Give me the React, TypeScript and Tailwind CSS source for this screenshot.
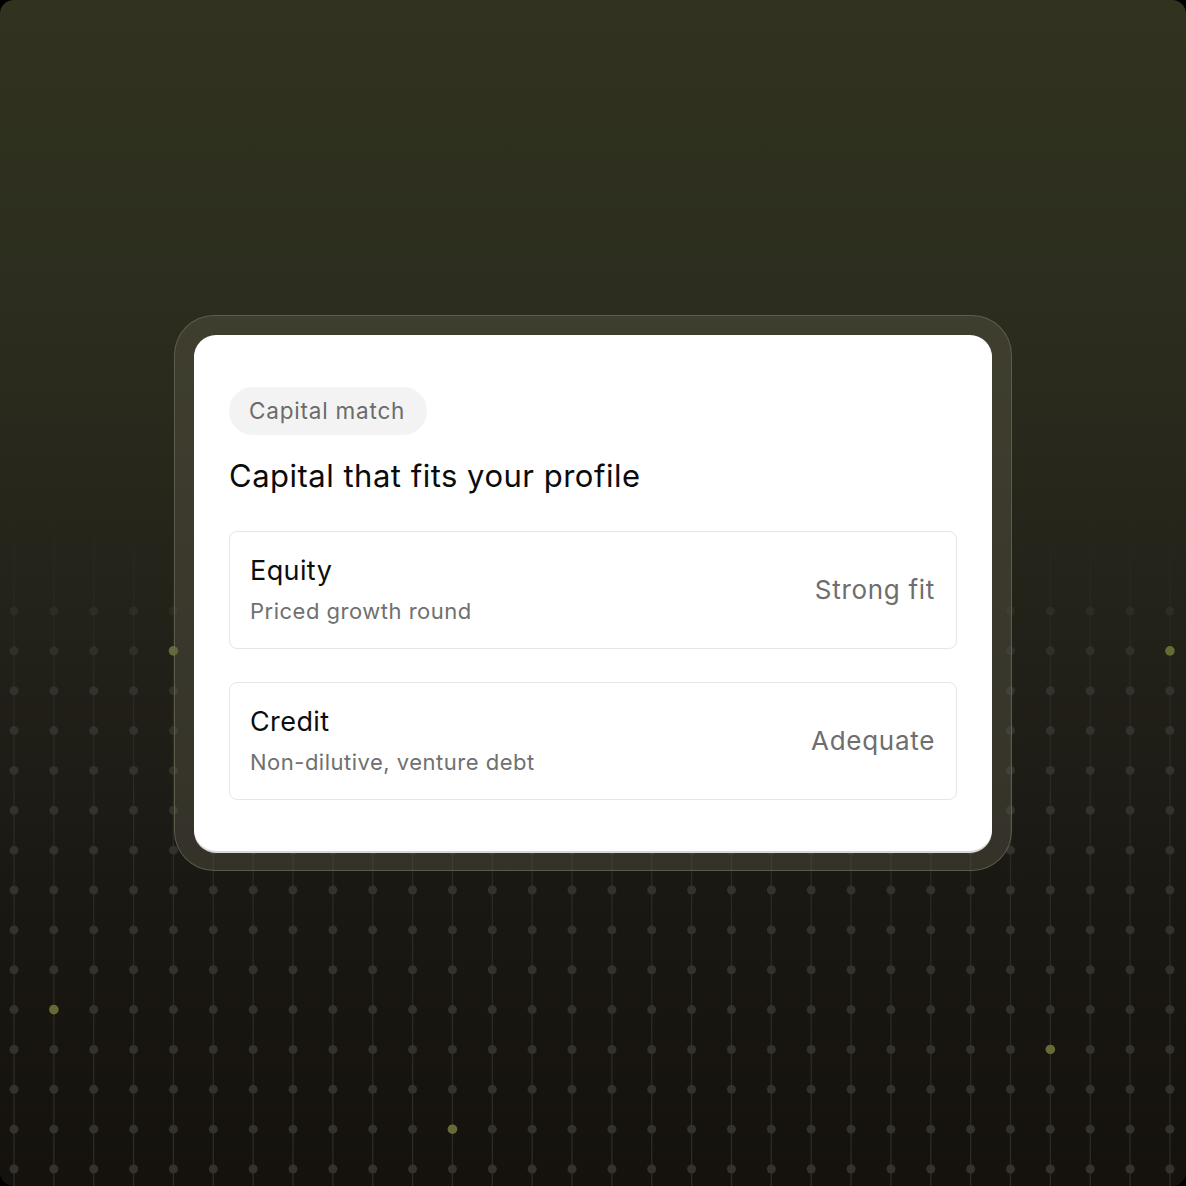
import React from "react";

const COLS = 30;
const ROWS = 15;
const SP = 39.86;
const X0 = 14;
const Y0 = 611;

const highlights = new Set(["4-1", "29-1", "1-10", "26-11", "11-13"]);

function DotGrid() {
  const lines: React.ReactNode[] = [];
  const dots: React.ReactNode[] = [];
  for (let c = 0; c < COLS; c++) {
    const x = X0 + c * SP;
    lines.push(
      <line key={"l" + c} x1={x} y1={490} x2={x} y2={1186} stroke="url(#lineGrad)" strokeWidth={1.2} />
    );
    for (let r = 0; r < ROWS; r++) {
      const y = Y0 + r * SP;
      const hl = highlights.has(`${c}-${r}`);
      dots.push(
        <circle
          key={`d${c}-${r}`}
          cx={x}
          cy={y}
          r={hl ? 4.8 : 4.5}
          fill={hl ? "#686a36" : "#33322d"}
          opacity={hl ? 1 : r === 0 ? 0.6 : r === 1 ? 0.85 : 1}
        />
      );
    }
  }
  return (
    <svg className="absolute inset-0" width={1186} height={1186} viewBox="0 0 1186 1186">
      <defs>
        <linearGradient id="lineGrad" x1="0" y1="490" x2="0" y2="1186" gradientUnits="userSpaceOnUse">
          <stop offset="0" stopColor="#33332b" stopOpacity="0" />
          <stop offset="0.3" stopColor="#33332b" stopOpacity="0.6" />
          <stop offset="1" stopColor="#2e2c28" stopOpacity="1" />
        </linearGradient>
      </defs>
      {lines}
      {dots}
    </svg>
  );
}

function Row({ title, sub, fit }: { title: string; sub: string; fit: string }) {
  return (
    <div className="flex items-center justify-between h-[118px] rounded-[8px] border border-[#e6e6e6] pl-[20px] pr-[21px]">
      <div className="flex flex-col">
        <div className="text-[27px] leading-[34px] text-[#0d0d0d] tracking-[0.4px]">{title}</div>
        <div className="text-[22px] leading-[30px] mt-[8px] text-[#707070] tracking-[0.5px]">{sub}</div>
      </div>
      <div className="text-[26px] text-[#6e6e6e] pb-[2px] tracking-[0.7px]">{fit}</div>
    </div>
  );
}

export default function App() {
  return (
    <div className="w-[1186px] h-[1186px] bg-black" style={{ fontFamily: "Inter, 'Noto Sans', sans-serif" }}>
      <div className="relative w-full h-full rounded-[14px] overflow-hidden bg-[linear-gradient(180deg,#31331f_0%,#2c2d1e_25%,#24231a_50%,#1a1813_75%,#15120e_100%)]">
        <DotGrid />
        <div className="relative flex justify-center pt-[315px]">
          <div className="w-[838px] h-[556px] rounded-[40px] border border-[#6b6b5a]/70 bg-[#5c5b48]/40 p-[19px]">
            <div className="h-full rounded-[22px] bg-white shadow-[0_2px_0_#d8d8d8] px-[35px] pt-[52px]">
              <div className="inline-flex items-center h-[48px] pl-[20px] pr-[22px] rounded-full bg-[#f3f3f3] text-[22.5px] text-[#6b6b6b] tracking-[0.8px]">
                Capital match
              </div>
              <div className="mt-[22px] text-[31px] leading-[38px] text-[#0b0b0b] tracking-[0.5px]">
                Capital that fits your profile
              </div>
              <div className="mt-[36px] flex flex-col gap-[33px]">
                <Row title="Equity" sub="Priced growth round" fit="Strong fit" />
                <Row title="Credit" sub="Non-dilutive, venture debt" fit="Adequate" />
              </div>
            </div>
          </div>
        </div>
      </div>
    </div>
  );
}
